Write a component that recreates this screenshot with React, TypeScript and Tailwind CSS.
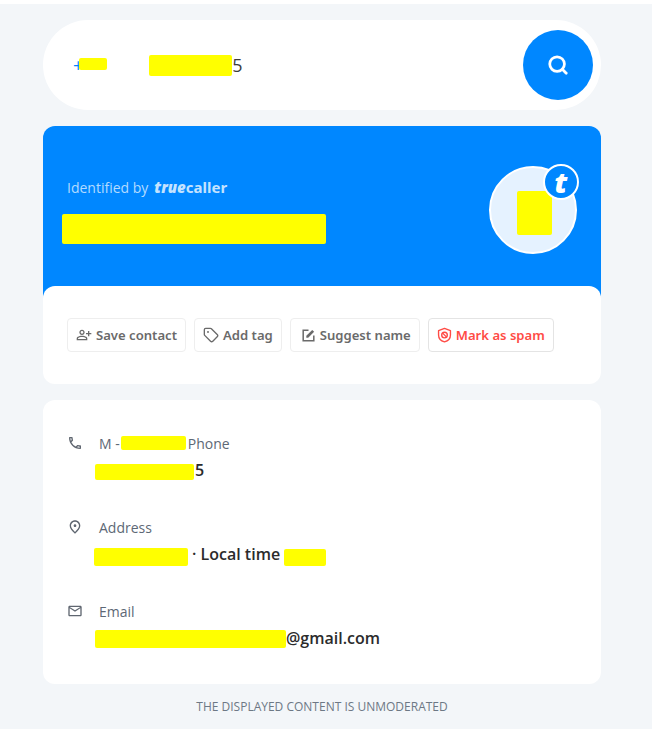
import { Search } from "lucide-react";
import { MdOutlineEmail, MdOutlinePersonAddAlt, MdOutlinePhone, MdOutlinePlace } from "react-icons/md";
import { LuTag } from "react-icons/lu";
import type { ReactNode } from "react";

function Redacted({ className }: { className: string }) {
  return <span className={`inline-block shrink-0 rounded-[2px] bg-[#ffff00] ${className}`} />;
}

function PencilBox() {
  return (
    <svg className="ml-[2px]" width="15" height="15" viewBox="0 0 24 24" fill="none" stroke="currentColor" strokeWidth="2.4">
      <path d="M12 3.5H3.5v17h17V12" />
      <path d="M8.5 15.5v-3L18 3l3 3-9.500 9.500z" fill="currentColor" stroke="none" />
    </svg>
  );
}

function SpamShield() {
  return (
    <svg width="15" height="16" viewBox="0 0 24 24" fill="none" stroke="currentColor" strokeWidth="2.2" strokeLinejoin="round">
      <path d="M12 1.500l9.500 3.500v7c0 5.500-4 9.500-9.500 11-5.500-1.500-9.500-5.500-9.500-11V5z" />
      <circle cx="12" cy="12" r="4.500" />
      <path d="M9 9l6 6" />
    </svg>
  );
}

function ActionButton({ icon, label, danger }: { icon: ReactNode; label: string; danger?: boolean }) {
  return (
    <button
      className={`flex h-[34px] items-center gap-1 rounded-[4px] border px-2 font-['Noto_Sans',sans-serif] text-[13.1px] font-semibold ${
        danger ? "border-[#e4e4e4] text-[#ff4b45]" : "border-[#eeeeee] text-[#6a6a6a]"
      }`}
    >
      {icon}
      <span className="pt-[2px]">{label}</span>
    </button>
  );
}

function InfoRow({ icon, label, children }: { icon: ReactNode; label: ReactNode; children: ReactNode }) {
  return (
    <div className="h-[84px]">
      <div className="flex h-[20px] items-center text-[14px] text-[#5d6875]">
        <span className="flex w-[32px] text-[#5f6670]">{icon}</span>
        {label}
      </div>
      <div className="ml-[28px] mt-[7px] flex h-[20px] items-center text-[16px] font-semibold whitespace-pre text-[#2b2b2b]">
        {children}
      </div>
    </div>
  );
}

export default function App() {
  return (
    <div className="h-[729px] bg-white pt-1 font-['Open_Sans',sans-serif]">
      <div className="h-[725px] bg-[#f3f6f9] pl-[43px] pr-[51px] pt-4">
        <div className="flex h-[90px] items-center justify-between rounded-[45px] bg-white pl-[30px] pr-[8px]">
          <div className="flex items-center text-[18px] text-[#3d3d3d]">
            <span className="text-[#0087ff]">+</span>
            <Redacted className="-ml-[4px] -mt-[2px] h-[12px] w-[28px]" />
            <Redacted className="ml-[42px] h-[21px] w-[83px]" />
            <span>5</span>
          </div>
          <button className="flex size-[70px] items-center justify-center rounded-full bg-[#0087ff] text-white">
            <Search size={22} strokeWidth={3} />
          </button>
        </div>

        <div className="mt-4 flex h-[174px] items-start justify-between rounded-t-[12px] bg-[#0087ff] pl-[19px] pr-[24px] pt-[40px]">
          <div>
            <div className="flex h-[44px] items-center pb-[2px] pl-[5px] text-[14px] text-[#b3dbff]">
              Identified by
              <span className="ml-[6px] flex items-baseline font-['Noto_Sans',sans-serif] text-[15px] font-bold leading-none text-[#c4e3ff]">
                <span className="font-black italic">true</span>
                <span>caller</span>
              </span>
            </div>
            <Redacted className="mt-[4px] block h-[30px] w-[264px]" />
          </div>
          <div className="relative flex size-[88px] items-center justify-center rounded-full border-2 border-white bg-[#e5f2ff]">
            <Redacted className="mt-[5px] ml-[3px] h-[44px] w-[35px]" />
            <span className="absolute -right-[4px] -top-[4px] flex size-[36px] items-center justify-center rounded-full border-2 border-white bg-[#0087ff] font-['Noto_Sans',sans-serif] text-[28px] font-black italic leading-none text-white">
              t
            </span>
          </div>
        </div>

        <div className="relative -mt-[14px] flex h-[98px] items-center gap-2 rounded-[12px] bg-white px-6">
          <ActionButton icon={<MdOutlinePersonAddAlt size={16} />} label="Save contact" />
          <ActionButton icon={<LuTag size={16} />} label="Add tag" />
          <ActionButton icon={<PencilBox />} label="Suggest name" />
          <ActionButton icon={<SpamShield />} label="Mark as spam" danger />
        </div>

        <div className="mt-4 h-[284px] rounded-[12px] bg-white pl-[24px] pt-[33px]">
          <InfoRow
            icon={<MdOutlinePhone size={16} />}
            label={
              <span className="flex items-center">
                M -
                <Redacted className="ml-[1px] h-[14px] w-[65px]" />
                <span className="ml-[2px]">Phone</span>
              </span>
            }
          >
            <Redacted className="mt-[4px] h-[16px] w-[99px]" />
            <span className="ml-px">5</span>
          </InfoRow>
          <InfoRow icon={<MdOutlinePlace size={16} />} label="Address">
            <Redacted className="-ml-px mt-[6px] h-[18px] w-[94px]" />
            <span className="ml-[4px]">· Local time </span>
            <Redacted className="mt-[6px] h-[17px] w-[42px]" />
          </InfoRow>
          <InfoRow icon={<MdOutlineEmail size={16} />} label="Email">
            <Redacted className="mt-[2px] h-[18px] w-[191px]" />
            <span>@gmail.com</span>
          </InfoRow>
        </div>

        <p className="mt-[14px] text-center text-[12px] text-[#6d7885]">THE DISPLAYED CONTENT IS UNMODERATED</p>
      </div>
    </div>
  );
}
